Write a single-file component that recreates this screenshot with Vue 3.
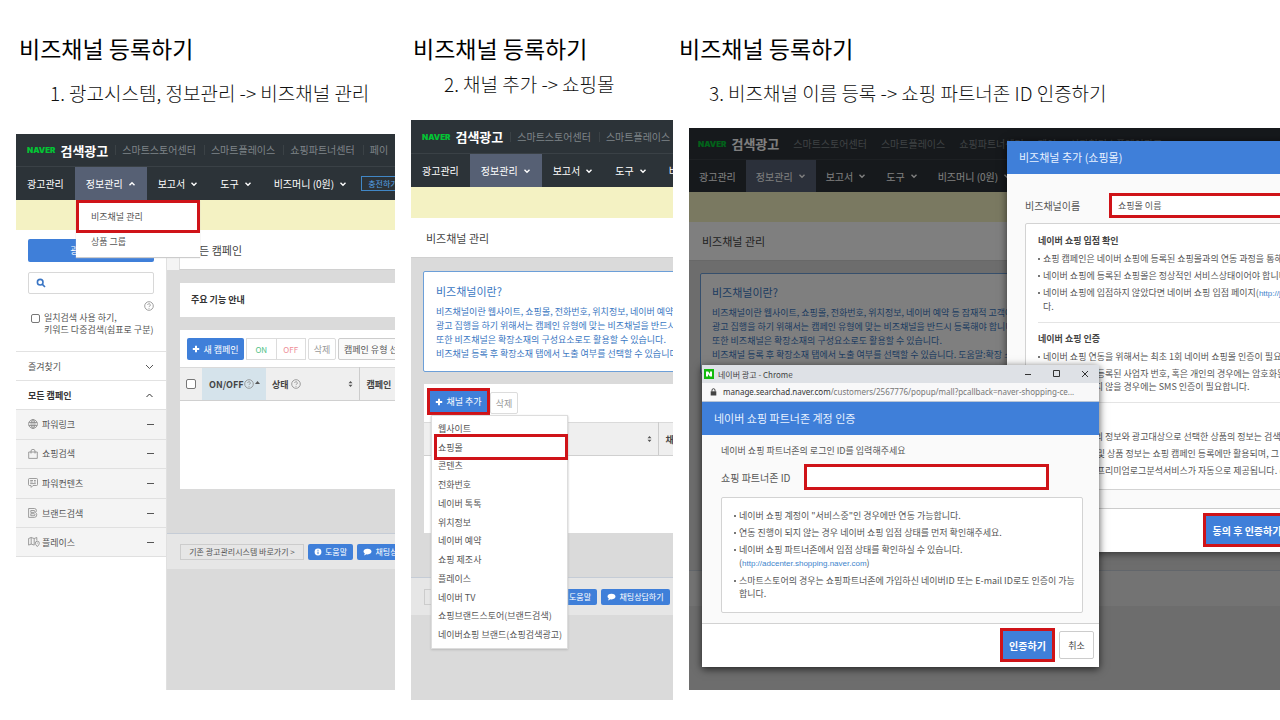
<script setup>
const mall = '스마트스토어센터'
const place = '스마트플레이스'
const partner = '쇼핑파트너센터'

const shots = [
  {
    id: 'one',
    step: '1. 광고시스템, 정보관리 -> 비즈채널 관리',
    links: [mall, place, partner, '페이'],
    open: true
  },
  {
    id: 'two',
    step: '2. 채널 추가 -> 쇼핑몰',
    links: [mall, place],
    open: false
  },
  {
    id: 'three',
    step: '3. 비즈채널 이름 등록 -> 쇼핑 파트너존 ID 인증하기',
    links: [mall, place, partner, '페이', '성과형디스플레이광고'],
    open: false
  }
]

const tabs = [
  { label: '광고관리' },
  { label: '정보관리', arrow: true, active: true },
  { label: '보고서', arrow: true },
  { label: '도구', arrow: true },
  { label: '비즈머니 (0원)', arrow: true }
]

const campaigns = [
  { icon: 'globe', label: '파워링크' },
  { icon: 'bag', label: '쇼핑검색' },
  { icon: 'note', label: '파워컨텐츠' },
  { icon: 'brand', label: '브랜드검색' },
  { icon: 'map', label: '플레이스' }
]

const channels = [
  '웹사이트', '쇼핑몰', '콘텐츠', '전화번호', '네이버 톡톡', '위치정보',
  '네이버 예약', '쇼핑 제조사', '플레이스', '네이버 TV',
  '쇼핑브랜드스토어(브랜드검색)', '네이버쇼핑 브랜드(쇼핑검색광고)'
]

const intro = [
  '비즈채널이란 웹사이트, 쇼핑몰, 전화번호, 위치정보, 네이버 예약 등 잠재적 고객에게',
  '광고 집행을 하기 위해서는 캠페인 유형에 맞는 비즈채널을 반드시 등록해야 합니다.',
  '또한 비즈채널은 확장소재의 구성요소로도 활용할 수 있습니다.',
  '비즈채널 등록 후 확장소재 탭에서 노출 여부를 선택할 수 있습니다. 도움말:확장 소재'
]
</script>

<template>
  <main class="page">
    <section v-for="shot in shots" :key="shot.id" class="step" :class="shot.id">
      <h2>비즈채널 등록하기</h2>
      <p class="caption">{{ shot.step }}</p>

      <div class="shot">
        <header class="topbar">
          <span class="naver">NAVER</span>
          <strong>검색광고</strong>
          <a v-for="link in shot.links" :key="link" href="#">{{ link }}</a>
        </header>
        <nav class="tabs">
          <a v-for="tab in tabs" :key="tab.label" href="#" :class="{ active: tab.active }">
            {{ tab.label }}
            <svg v-if="tab.arrow" width="8" height="8" viewBox="0 0 8 8">
              <path :d="tab.active && shot.open ? 'M1.5 5.3 4 2.8l2.5 2.5' : 'M1.5 2.8 4 5.3l2.5-2.5'" />
            </svg>
          </a>
          <button v-if="shot.id === 'one'" type="button" class="charge">충전하기</button>
        </nav>
        <div class="notice"></div>

        <template v-if="shot.id === 'one'">
          <div class="submenu">
            <a href="#" class="marked">비즈채널 관리</a>
            <a href="#">상품 그룹</a>
          </div>
          <div class="workspace">
            <aside>
              <button type="button" class="blue create">광고만들기</button>
              <label class="search">
                <svg width="10" height="10" viewBox="0 0 10 10"><circle cx="4.2" cy="4.2" r="2.8" /><path d="m6.4 6.4 2.6 2.6" /></svg>
                <input type="text" aria-label="검색" />
              </label>
              <svg class="help aside-help" width="10" height="10" viewBox="0 0 10 10"><circle cx="5" cy="5" r="4.3" /><path d="M3.7 4a1.3 1.3 0 1 1 2 1.1q-.7.4-.7 1M5 7v.8" /></svg>
              <label class="exact">
                <input type="checkbox" />
                <span>일치검색 사용 하기,<br />키워드 다중검색(쉼표로 구분)</span>
              </label>
              <a href="#" class="fold">즐겨찾기<svg width="9" height="9" viewBox="0 0 9 9"><path d="M1 3l3.5 3.5L8 3" /></svg></a>
              <a href="#" class="fold strong">모든 캠페인<svg width="9" height="9" viewBox="0 0 9 9"><path d="M1.5 6l3-3 3 3" /></svg></a>
              <ul class="kinds">
                <li v-for="item in campaigns" :key="item.label">
                  <svg class="kind" width="12" height="12" viewBox="0 0 12 12">
                    <template v-if="item.icon === 'globe'"><circle cx="5" cy="6" r="4.4" /><ellipse cx="5" cy="6" rx="2" ry="4.4" /><path d="M.8 4.5h8.4M.8 7.5h8.4M5 1.6v8.8" /></template>
                    <template v-else-if="item.icon === 'bag'"><path d="M.7 4h8.6v6.4H.7zM3 5.5V3q0-1.6 2-1.6T7 3v2.5" /></template>
                    <template v-else-if="item.icon === 'note'"><path d="M1.5 1.5h7q1 0 1 1v5q0 1-1 1H5L3.2 10.4 3 8.5H1.5q-1 0-1-1v-5q0-1 1-1zM2.2 3.5H5M2.2 5h2.5M6 3.5h1.8M6 5h1.8M2.2 6.6h5.6" /></template>
                    <template v-else-if="item.icon === 'brand'"><path d="M.6 1.5h5.800q2 0 2 2 0 1.400-1 2 1.400.6 1.400 2.300 0 2.600-2.600 2.600H.6zM2.800 3.500h3.200q1 .1 1 .9t-1 1H2.800zM2.800 6.700H6q1 .1 1 1t-1 1H2.800z" /></template>
                    <template v-else><path d="M.6 2.5l2.6-1 3 1 2.600-1v3M.6 2.500v6.600l2.600-1 3 1M3.200 1.500v6.600M6.200 2.500v6.600M9.300 10.600Q7.300 8.600 7.300 7.200a2 2 0 0 1 4 0q0 1.400-2 3.400zM9.300 6.600v1" /></template>
                  </svg>
                  <a href="#">{{ item.label }}</a>
                  <i></i>
                </li>
              </ul>
            </aside>
            <div class="main">
              <div class="heading"><h3>모든 캠페인</h3></div>
              <div class="card guide">주요 기능 안내</div>
              <div class="card list">
                <div class="tools">
                  <button type="button" class="blue">
                    <svg width="8" height="8" viewBox="0 0 8 8"><path d="M4 .8v6.4M.8 4h6.4" /></svg>새 캠페인
                  </button>
                  <span class="pair"><button type="button" class="on">ON</button><button type="button" class="off">OFF</button></span>
                  <button type="button" class="plain">삭제</button>
                  <select aria-label="캠페인 유형"><option>캠페인 유형 선택</option></select>
                </div>
                <table>
                  <thead>
                    <tr>
                      <th class="check"><input type="checkbox" aria-label="전체 선택" /></th>
                      <th class="onoff"><span>ON/OFF<svg class="help" width="10" height="10" viewBox="0 0 10 10"><circle cx="5" cy="5" r="4.3" /><path d="M3.7 4a1.3 1.3 0 1 1 2 1.1q-.7.4-.7 1M5 7v.8" /></svg><svg class="tri" width="6" height="9" viewBox="0 0 6 9"><path d="M1 4 3.500 1 6 4z" /></svg></span></th>
                      <th class="status"><span>상태<svg class="help" width="10" height="10" viewBox="0 0 10 10"><circle cx="5" cy="5" r="4.3" /><path d="M3.7 4a1.3 1.3 0 1 1 2 1.1q-.7.4-.7 1M5 7v.8" /></svg><svg class="sort" width="5" height="8" viewBox="0 0 5 8"><path d="M.5 3.200 2.500 1 4.500 3.200zM.5 4.800 2.500 7l2-2.200z" /></svg></span></th>
                      <th class="name">캠페인</th>
                    </tr>
                  </thead>
                </table>
              </div>
              <footer class="foot">
                <a href="#" class="legacy">기존 광고관리시스템 바로가기 &gt;</a>
                <button type="button" class="blue"><svg width="8" height="8" viewBox="0 0 8 8"><circle class="disc" cx="4" cy="4" r="3.4" /><path class="ink" d="M4 1.800v1M4 3.600v2.500" /></svg>도움말</button>
                <button type="button" class="blue"><svg width="9" height="8" viewBox="0 0 9 8"><path class="disc" d="M4.500.8C7 .8 8.500 2 8.500 3.600S7 6.400 4.500 6.400l-1-.1L1 7.500l.8-1.900Q.5 4.800.5 3.600C.5 2 2 .8 4.500.8z" /></svg>채팅상담하기</button>
              </footer>
            </div>
          </div>
        </template>

        <template v-else>
          <div class="main">
            <div class="heading"><h3>비즈채널 관리</h3></div>
            <div class="about">
              <h4>비즈채널이란?</h4>
              <p v-for="line in intro" :key="line">{{ line }}</p>
            </div>
            <div class="card list">
              <div class="tools">
                <span class="add">
                  <button type="button" class="blue"><svg width="8" height="8" viewBox="0 0 8 8"><path d="M4 .8v6.400M.8 4h6.400" /></svg>채널 추가</button>
                </span>
                <button type="button" class="plain">삭제</button>
                <ul v-if="shot.id === 'two'" class="menu">
                  <li v-for="(item, n) in channels" :key="item" :class="{ marked: n === 1 }"><a href="#">{{ item }}</a></li>
                </ul>
              </div>
              <table>
                <thead>
                  <tr>
                    <th class="first"><span><svg class="sort" width="5" height="8" viewBox="0 0 5 8"><path d="M.5 3.200 2.500 1 4.500 3.200zM.5 4.800 2.500 7l2-2.200z" /></svg></span></th>
                    <th class="name">채널</th>
                  </tr>
                </thead>
              </table>
            </div>
            <footer class="foot">
              <a href="#" class="legacy">기존 광고관리시스템 바로가기 &gt;</a>
              <button type="button" class="blue"><svg width="8" height="8" viewBox="0 0 8 8"><circle class="disc" cx="4" cy="4" r="3.400" /><path class="ink" d="M4 1.800v1M4 3.600v2.500" /></svg>도움말</button>
              <button type="button" class="blue"><svg width="9" height="8" viewBox="0 0 9 8"><path class="disc" d="M4.500.8C7 .8 8.500 2 8.500 3.600S7 6.400 4.500 6.400l-1-.1L1 7.500l.8-1.900Q.5 4.800.5 3.600C.5 2 2 .8 4.500.8z" /></svg>채팅상담하기</button>
            </footer>
          </div>
        </template>

        <template v-if="shot.id === 'three'">
          <div class="shade"></div>

          <form class="dialog" @submit.prevent>
            <h3>비즈채널 추가 (쇼핑몰)</h3>
            <div class="dialog-body">
              <div class="field">
                <label for="channel-name">비즈채널이름</label>
                <input id="channel-name" type="text" value="쇼핑몰 이름" />
              </div>
              <div class="terms">
                <h4>네이버 쇼핑 입점 확인</h4>
                <ul>
                  <li>쇼핑 캠페인은 네이버 쇼핑에 등록된 쇼핑몰과의 연동 과정을 통해</li>
                  <li>네이버 쇼핑에 등록된 쇼핑몰은 정상적인 서비스상태이어야 합니다.</li>
                  <li>네이버 쇼핑에 입점하지 않았다면 네이버 쇼핑 입점 페이지(<a href="#">http://join</a><br />다.</li>
                </ul>
                <h4>네이버 쇼핑 인증</h4>
                <ul>
                  <li>네이버 쇼핑 연동을 위해서는 최초 1회 네이버 쇼핑몰 인증이 필요합니다.</li>
                  <li>네이버 쇼핑에 등록된 사업자 번호, 혹은 개인의 경우에는 암호화된<br />인증정보가 있지 않을 경우에는 SMS 인증이 필요합니다.</li>
                </ul>
                <h4>정보 제공</h4>
                <ul>
                  <li>연동된 쇼핑몰의 정보와 광고대상으로 선택한 상품의 정보는 검색광고</li>
                  <li>쇼핑몰의 정보 및 상품 정보는 쇼핑 캠페인 등록에만 활용되며, 그 외</li>
                  <li>쇼핑 캠페인에 프리미엄로그분석서비스가 자동으로 제공됩니다. (단</li>
                </ul>
              </div>
            </div>
            <div class="dialog-foot"><span class="ring"><button type="submit" class="blue">동의 후 인증하기</button></span></div>
          </form>

          <form class="popup" @submit.prevent>
            <div class="titlebar">
              <svg class="favicon" width="10" height="10" viewBox="0 0 10 10"><path class="tile" d="M0 0h10v10H0z" /><path class="mark" d="M2 2.500h2.200L6 5V2.500h2v5H5.900L4 5v2.500H2z" /></svg>
              <span>네이버 광고 - Chrome</span>
              <svg class="controls" width="66" height="10" viewBox="0 0 66 10"><path d="M1 5.500h6M29.500 1.500h6v6h-6zM58 2l6 6M64 2l-6 6" /></svg>
            </div>
            <div class="address">
              <svg width="7" height="8" viewBox="0 0 7 8"><path class="body" d="M.7 3.300h5.600v4.200H.7z" /><path class="bow" d="M2 3.500V2.200q0-1.500 1.500-1.500T5 2.200v1.300" /></svg>
              <span><b>manage.searchad.naver.com</b>/customers/2567776/popup/mall?pcallback=naver-shopping-ce...</span>
            </div>
            <h3>네이버 쇼핑 파트너존 계정 인증</h3>
            <div class="popup-body">
              <p>네이버 쇼핑 파트너존의 로그인 ID를 입력해주세요</p>
              <div class="field">
                <label for="partner-id">쇼핑 파트너존 ID</label>
                <input id="partner-id" type="text" />
              </div>
              <ul>
                <li>네이버 쇼핑 계정이 "서비스중"인 경우에만 연동 가능합니다.</li>
                <li>연동 진행이 되지 않는 경우 네이버 쇼핑 입점 상태를 먼저 확인해주세요.</li>
                <li>네이버 쇼핑 파트너존에서 입점 상태를 확인하실 수 있습니다.<br />(<a href="#">http://adcenter.shopping.naver.com</a>)</li>
                <li>스마트스토어의 경우는 쇼핑파트너존에 가입하신 네이버ID 또는 E-mail ID로도 인증이 가능합니다.</li>
              </ul>
            </div>
            <div class="popup-foot">
              <span class="ring"><button type="submit" class="blue">인증하기</button></span>
              <button type="button" class="cancel">취소</button>
            </div>
          </form>
        </template>
      </div>
    </section>
  </main>
</template>

<style>
body {
  background: #fff;
}
</style>

<style scoped>
* {
  box-sizing: border-box;
}

.page {
  display: grid;
  grid-template-columns: 395fr 278fr 607fr;
  min-height: 720px;
  overflow: hidden;
  font-family: "Noto Sans CJK KR", sans-serif;
  font-size: 9px;
  color: #555;
}

h2, h3, h4, p, ul {
  margin: 0;
  padding: 0;
  font-weight: 400;
}

ul {
  list-style: none;
}

a {
  color: inherit;
  text-decoration: none;
}

button, input, select {
  font: inherit;
  margin: 0;
}

button {
  padding: 0;
  border: 0;
  white-space: nowrap;
  display: inline-flex;
  align-items: center;
  justify-content: center;
}

svg {
  flex: none;
  fill: none;
  stroke: currentColor;
}

/* columns */
.step {
  min-width: 0;
  padding: 32px 0 0 16px;
}

h2 {
  font: 400 23px/32px "Noto Sans CJK KR", sans-serif;
  color: #000;
  white-space: nowrap;
}

.caption {
  font: 300 19px/28px "Noto Sans CJK KR", sans-serif;
  color: #111;
  white-space: nowrap;
}

.one h2 { margin-left: 3px; }
.two h2 { margin-left: 2px; }
.three h2 { margin-left: -10px; }
.one .caption { margin: 15px 0 27px 34px; }
.two .caption { margin: 6px 0 22px 33px; }
.three .caption { margin: 15px 0 21px 20px; }

.shot {
  position: relative;
  overflow: hidden;
  display: flex;
  flex-direction: column;
  min-height: 556px;
}

.two .shot { min-height: 580px; }
.three .shot { min-height: 562px; }

/* site header */
.topbar {
  display: flex;
  align-items: center;
  height: 32px;
  padding-left: 11px;
  background: #2c3338;
  color: #7f8488;
  font-size: 10px;
  white-space: nowrap;
}

.two .topbar { height: 33px; }
.three .topbar { height: 31px; padding-left: 9px; }

.naver {
  font: 900 8px/10px Inter, sans-serif;
  color: #03c434;
}

.topbar strong {
  margin: 0 7px 0 5px;
  font-size: 13px;
  color: #fff;
}

.topbar a {
  padding: 0 8px 0 6px;
  border-left: 1px solid #3b4246;
  line-height: 10px;
}

.three .topbar a { padding: 0 7px 0 6px; border-color: transparent; }

.tabs {
  display: flex;
  height: 34px;
  border-top: 1px solid #3a4146;
  background: #2c3338;
  color: #fff;
  font-size: 10px;
  white-space: nowrap;
}

.three .tabs { height: 33px; }

.tabs a {
  display: flex;
  align-items: center;
  gap: 5px;
  padding: 0 11px;
}

.three .tabs a { padding: 0 10px; }

.tabs a svg { stroke-width: 1.4; }
.tabs .active { background: #566074; }

.charge {
  align-self: center;
  height: 15px;
  margin-left: 3px;
  padding: 0 6px;
  border: 1px solid #4187c6;
  background: transparent;
  color: #53a0e4;
  font-size: 8px;
}

.notice {
  height: 30px;
  background: #f4f2c3;
}

.two .notice { height: 31px; }

/* shared pieces */
.blue {
  gap: 3px;
  background: #3f7fd9;
  border-radius: 2px;
  color: #fff;
}

.blue svg { stroke-width: 2; }
.blue .disc { fill: #fff; stroke: none; }
.blue .ink { stroke: #3f7fd9; stroke-width: 1; }

.plain {
  border: 1px solid #dcdcdc;
  border-radius: 2px;
  background: #fff;
  color: #999;
}

.help {
  color: #888;
  stroke-width: 0.8;
}

.sort, .tri { fill: #555; stroke: none; }

.main {
  flex: 1;
  min-width: 0;
  background: #dadada;
}

.heading {
  height: 40px;
  display: flex;
  align-items: center;
  padding-left: 15px;
  border-bottom: 1px solid #d0d0d0;
  background: #fff;
}

.three .heading { height: 39px; padding-left: 13px; }

.heading h3 {
  font-size: 11px;
  color: #444;
  white-space: nowrap;
}

.card {
  background: #fff;
  overflow: hidden;
}

.tools {
  display: flex;
  height: 22px;
  white-space: nowrap;
}

table {
  width: 100%;
  table-layout: fixed;
  border-collapse: collapse;
}

th {
  height: 33px;
  padding: 0;
  border-top: 1px solid #dadada;
  border-bottom: 1px solid #d0d0d0;
  background: #efefef;
  color: #444;
  font-size: 9px;
  text-align: left;
  white-space: nowrap;
}

th span {
  display: flex;
  align-items: center;
}

.foot {
  display: flex;
  align-items: center;
  gap: 4px;
  height: 36px;
  padding-left: 13px;
  border-top: 1px solid #c5ccd6;
  background: #e6e6e6;
  font-size: 8px;
  white-space: nowrap;
  overflow: hidden;
}

.legacy {
  flex: none;
  width: 124px;
  height: 16px;
  border: 1px solid #ccc;
  line-height: 14px;
  text-align: center;
}

.foot button {
  flex: none;
  height: 16px;
  width: 45px;
}

.foot button:last-child { width: 69px; }

/* step 1 */
.submenu {
  position: absolute;
  z-index: 2;
  top: 66px;
  left: 60px;
  width: 124px;
  height: 57px;
  background: #fff;
  box-shadow: 0 1px 1px #ccc;
}

.submenu a {
  display: block;
  height: 24px;
  padding-left: 15px;
  line-height: 18px;
}

.submenu .marked {
  height: 33px;
  padding-left: 12px;
  line-height: 27px;
  border: 3px solid #cf1318;
}

.workspace {
  flex: 1;
  display: flex;
}

aside {
  flex: none;
  width: 151px;
  border-right: 1px solid #e0e0e0;
  background: #fff;
  display: flex;
  flex-direction: column;
}

.create {
  height: 23px;
  margin: 9px 12px 10px;
}

.search {
  display: flex;
  align-items: center;
  height: 22px;
  margin: 0 12px;
  padding-left: 7px;
  border: 1px solid #d8d8d8;
  border-radius: 2px;
  color: #3a75c4;
}

.search svg { stroke-width: 1.6; }

.search input {
  flex: 1;
  min-width: 0;
  border: 0;
  background: none;
  outline: 0;
}

.aside-help {
  align-self: flex-end;
  margin: 7px 12px 1px 0;
}

.exact {
  display: flex;
  gap: 4px;
  margin: 0 0 15px 15px;
  line-height: 12px;
  white-space: nowrap;
}

.exact input, .check input {
  appearance: none;
  flex: none;
  width: 9px;
  height: 9px;
  margin-top: 2px;
  border: 1px solid #777;
  border-radius: 2px;
  background: #fff;
}

.fold {
  display: flex;
  align-items: center;
  justify-content: space-between;
  height: 29px;
  padding: 0 12px;
  border-top: 1px solid #e2e2e2;
}

.strong {
  font-weight: 700;
  color: #333;
}

.kinds {
  display: grid;
  grid-auto-rows: 1fr;
  height: 148px;
  background: #f4f4f4;
}

.kinds li {
  display: flex;
  align-items: center;
  gap: 2px;
  padding: 0 12px;
  border-top: 1px solid #e0e0e0;
}

.kinds li:last-child { border-bottom: 1px solid #e0e0e0; }
.kinds a { flex: 1; }
.kind { color: #888; stroke-width: 0.8; }
.kinds i { width: 7px; height: 1px; background: #555; }

.one .heading {
  margin-left: 12px;
  padding-left: 9px;
  border-left: 1px solid #ddd;
  box-shadow: -12px 0 0 #f4f4f4;
}

.one .card { margin-left: 13px; }

.guide {
  height: 34px;
  margin-top: 13px;
  padding-left: 11px;
  line-height: 34px;
  font-weight: 700;
  color: #333;
}

.one .list {
  height: 159px;
  margin-top: 13px;
  margin-bottom: 44px;
}

.one .tools {
  margin: 8px 0 7px 7px;
  gap: 2px;
}

.one .tools > * { flex: none; }
.one .tools .blue { width: 57px; }
.pair { display: flex; width: 60px; }
.one .tools .plain { width: 28px; }

.pair button {
  flex: 1;
  border: 1px solid #dcdcdc;
  background: #fff;
  font-size: 8px;
}

.pair .on { color: #4fbf86; }
.pair .off { color: #ee8d95; border-left: 0; }

.tools select {
  appearance: none;
  width: 90px;
  padding: 0 5px;
  border: 1px solid #ccc;
  border-radius: 2px;
  background: #fafafa;
  color: #555;
}

.one table { width: 260px; }
.check { width: 22px; padding-left: 6px; }
.check input { display: block; margin: 0; width: 10px; height: 10px; }
.onoff { width: 64px; padding-left: 7px; background: #d5e3eb; }
.status { width: 93px; padding-left: 6px; border-right: 1px solid #ccc; }
.status .help { margin-left: 2px; }
.status .sort { margin: 0 6px 0 auto; }
.name { padding-left: 7px; }

/* steps 2 and 3 */
.about {
  height: 101px;
  margin: 13px -4px 12px 12px;
  padding: 10px 0 0 12px;
  border: 1px solid #6c9fd8;
  border-radius: 2px;
  background: #fff;
  color: #3a77c2;
  white-space: nowrap;
}

.about h4 {
  font-size: 11px;
  line-height: 18px;
  margin-bottom: 5px;
}

.about p { line-height: 14px; }

.two .list, .three .list {
  height: 149px;
  margin: 0 0 44px 13px;
  overflow: visible;
}

.two .tools, .three .tools {
  position: relative;
  height: 38px;
  padding: 4px 0 0 3px;
}

.add {
  display: flex;
  width: 63px;
  height: 27px;
  border: 3px solid #cf1318;
}

.add button { flex: 1; border-radius: 0; }

.two .tools .plain, .three .tools .plain {
  width: 28px;
  height: 22px;
  margin-top: 4px;
}

.menu {
  position: absolute;
  z-index: 2;
  top: 31px;
  left: 7px;
  width: 137px;
  height: 234px;
  padding: 3px 0 4px;
  display: grid;
  grid-auto-rows: 1fr;
  align-items: center;
  background: #fff;
  border: 1px solid #ddd;
  box-shadow: 0 1px 2px #bbb;
}

.menu li { padding-left: 6px; position: relative; }

.menu .marked::after {
  content: "";
  position: absolute;
  inset: -7px -1px -6px 2px;
  border: 3px solid #cf1318;
}

.first { width: 234px; border-right: 1px solid #ccc; }
.first .sort { margin: 0 6px 0 auto; }
.two .foot { height: 38px; }

.three .about { margin: 12px 0 12px 11px; padding: 9px 0 0 11px; }
.three .list { margin-bottom: 35px; }

.shade {
  position: absolute;
  inset: 0;
  background: rgba(0, 0, 0, 0.5);
}

.field {
  display: flex;
  align-items: center;
}

.field input {
  min-width: 0;
  border: 3px solid #cf1318;
  background: #fff;
  outline: 0;
  color: #555;
}

.ring {
  display: flex;
  border: 3px solid #cf1318;
}

.ring button {
  flex: 1;
  border-radius: 0;
  font-weight: 700;
}

.dialog {
  position: absolute;
  top: 13px;
  left: 318px;
  width: 360px;
  background: #fff;
  box-shadow: 0 1px 8px rgba(0, 0, 0, 0.6);
  white-space: nowrap;
}

.dialog h3, .popup h3 {
  height: 33px;
  padding-left: 12px;
  line-height: 32px;
  font-size: 11px;
  color: #e8f1ff;
  background: #3f7fd9;
}

.dialog-body {
  padding: 19px 19px 18px 18px;
  background: #fafafa;
  border-bottom: 1px solid #ccc;
}

.field label { font-size: 10px; }
.dialog .field label { width: 84px; }
.dialog .field input { flex: 1; height: 25px; padding-left: 6px; }

.terms {
  height: 267px;
  margin-top: 5px;
  padding: 9px 12px 0;
  border: 1px solid #d3d3d3;
  border-radius: 2px;
  background: #fff;
}

.terms h4 {
  line-height: 15px;
  font-weight: 700;
  color: #444;
}

.terms h4:first-child, .terms h4:last-of-type { margin-bottom: 2px; }

.terms ul + h4 {
  margin-top: 9px;
  padding-top: 8px;
  border-top: 1px solid #e4e4e4;
}

.terms li, .popup li {
  position: relative;
  padding-left: 5px;
  margin-top: 4px;
  line-height: 13px;
}

.terms li::before, .popup li::before {
  content: "";
  position: absolute;
  left: 0;
  top: 6px;
  width: 2px;
  height: 2px;
  background: #777;
}

.terms li a, .popup li a {
  font-family: "Liberation Sans", sans-serif;
  font-size: 8px;
  color: #4185cc;
}

.dialog-foot {
  height: 43px;
  padding: 4px 0 0 196px;
}

.dialog-foot .ring {
  width: 88px;
  height: 34px;
  font-size: 10px;
}

.popup {
  position: absolute;
  top: 237px;
  left: 13px;
  width: 397px;
  background: #fff;
  box-shadow: 0 2px 8px rgba(0, 0, 0, 0.7);
  white-space: nowrap;
}

.titlebar {
  display: flex;
  align-items: center;
  height: 18px;
  padding: 0 9px 0 2px;
  background: #dee1e6;
  color: #444;
  font-size: 8px;
}

.favicon .tile { fill: #12b90d; stroke: none; }
.favicon .mark { fill: #fff; stroke: none; }
.titlebar span { margin-left: 4px; }
.controls { margin-left: auto; color: #333; }

.address {
  display: flex;
  align-items: center;
  gap: 6px;
  height: 19px;
  padding-left: 8px;
  border-bottom: 1px solid #b8c5d6;
  background: #f8f8f9;
  color: #777;
  font: 8px/18px "Noto Sans", sans-serif;
}

.address b { font-weight: 400; color: #333; }
.address .body { fill: #444; stroke: none; }
.address .bow { stroke: #444; }

.popup-body {
  padding: 9px 16px 10px 19px;
  background: #fafafa;
  border-bottom: 1px solid #d2d2d2;
}

.popup-body p { line-height: 14px; }
.popup .field { margin: 6px 0 7px; }
.popup .field label { width: 83px; }
.popup .field input { width: 245px; height: 26px; }

.popup-body ul {
  height: 116px;
  padding: 7px 2px 0 12px;
  border: 1px solid #d3d3d3;
  border-radius: 2px;
  background: #fff;
  white-space: normal;
}

.popup-foot {
  display: flex;
  align-items: flex-start;
  justify-content: flex-end;
  gap: 4px;
  height: 43px;
  padding: 4px 5px 0 0;
}

.popup-foot .ring {
  width: 55px;
  height: 34px;
  font-size: 10px;
}

.cancel {
  width: 35px;
  height: 28px;
  margin-top: 3px;
  border: 1px solid #ccc;
  border-radius: 2px;
  background: #fff;
  color: #444;
}
</style>
